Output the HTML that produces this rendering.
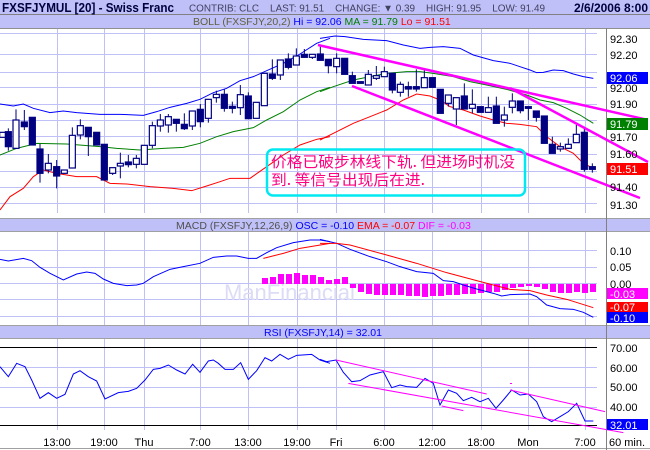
<!DOCTYPE html>
<html><head><meta charset="utf-8"><style>
html,body{margin:0;padding:0;background:#fff;width:650px;height:450px;overflow:hidden}
svg{display:block;font-family:"Liberation Sans","Noto Sans CJK SC",sans-serif}
</style></head><body>
<svg id="s" width="650" height="450" viewBox="0 0 650 450" xmlns="http://www.w3.org/2000/svg">
<rect x="0" y="0" width="650" height="450" fill="#fff"/>
<rect x="0" y="0" width="650" height="14" fill="#c0c0f8"/>
<line x1="0" y1="14.5" x2="650" y2="14.5" stroke="#808080"/>
<rect x="0" y="15" width="650" height="13" fill="#c0c0f8"/>
<line x1="0" y1="28.5" x2="650" y2="28.5" stroke="#909090"/>
<text x="2" y="12" font-size="13" font-weight="bold" fill="#000040" textLength="172" lengthAdjust="spacingAndGlyphs">FXSFJYMUL [20] - Swiss Franc</text>
<text x="189" y="11.5" font-size="10" fill="#404060" xml:space="preserve" textLength="356" lengthAdjust="spacingAndGlyphs">CONTRIB: CLC    LAST: 91.51    CHANGE: ▼ 0.39    HIGH: 91.95    LOW: 91.49</text>
<text x="648" y="12" font-size="12" font-weight="bold" fill="#000040" text-anchor="end">2/6/2006 8:00</text>
<text x="193" y="25" font-size="10.5" fill="#606040">BOLL (FXSFJY,20,2) <tspan fill="#0000ff">Hi = 92.06</tspan> <tspan fill="#008000">MA = 91.79</tspan> <tspan fill="#ff0000">Lo = 91.51</tspan></text>

<g id="grid" stroke="#c0c0f8" stroke-width="1"></g>

<rect x="0" y="219" width="650" height="12" fill="#c0c0f8"/>
<line x1="0" y1="218.5" x2="650" y2="218.5" stroke="#a0a0a0"/>
<line x1="0" y1="231.5" x2="650" y2="231.5" stroke="#a0a0a0"/>
<text x="176" y="229" font-size="10.5" fill="#505050">MACD (FXSFJY,12,26,9) <tspan fill="#0000ff">OSC = -0.10</tspan> <tspan fill="#ff0000">EMA = -0.07</tspan> <tspan fill="#ff00ff">DIF = -0.03</tspan></text>
<rect x="0" y="326" width="650" height="12" fill="#c0c0f8"/>
<line x1="0" y1="325.5" x2="650" y2="325.5" stroke="#a0a0a0"/>
<line x1="0" y1="338.5" x2="650" y2="338.5" stroke="#a0a0a0"/>
<text x="264" y="336" font-size="10.5" fill="#0000ff">RSI (FXSFJY,14) = 32.01</text>
<line x1="0" y1="448.5" x2="650" y2="448.5" stroke="#a0a0a0"/>
<line x1="606.5" y1="28" x2="606.5" y2="450" stroke="#808080"/>

<text x="224" y="300" font-size="22" fill="#dcdcf6">ManFinancial</text>

<g transform="translate(0,30) scale(0.33333)" fill="none">
<polyline vector-effect="non-scaling-stroke" stroke="#0000ff" points="0,222 40,228 70,222 100,235 150,248 190,243 230,248 300,253 360,253 430,256 470,245 510,232 560,220 600,208 640,188 680,175 720,152 760,140 800,122 850,100 900,72 950,40 990,25"/>
<polyline vector-effect="non-scaling-stroke" stroke="#008000" points="0,375 50,355 110,340 200,342 300,350 350,355 420,360 490,355 550,352 600,340 650,320 700,305 760,293 800,270 850,245 900,210 950,185 990,172"/>
<polyline vector-effect="non-scaling-stroke" stroke="#ff0000" points="0,540 30,500 70,475 100,440 130,420 170,430 230,440 290,440 330,460 380,462 450,470 520,475 575,482 620,468 660,455 690,445 750,445 800,410 850,375 900,345 950,328 990,320"/>
</g>
<g transform="translate(320,30) scale(0.33333)" fill="none">
<polyline vector-effect="non-scaling-stroke" stroke="#0000ff" points="0,25 45,18 75,20 130,28 200,32 250,45 300,55 330,52 370,50 420,55 460,75 520,92 570,100 600,110 630,120 650,128 670,127 700,120 730,122 760,132 790,140 820,145"/>
<polyline vector-effect="non-scaling-stroke" stroke="#008000" points="0,185 40,170 100,150 160,138 200,130 260,125 300,125 340,130 400,140 450,155 500,165 560,178 620,195 660,210 700,218 740,235 780,255 820,280"/>
<polyline vector-effect="non-scaling-stroke" stroke="#ff0000" points="0,330 50,305 100,280 150,260 200,240 250,210 290,192 330,198 360,210 390,230 430,240 480,258 520,270 560,280 600,283 650,290 680,320 720,350 760,370 790,400 820,415"/>
</g>
<g id="candles"></g>
<g stroke="#ff00ff" stroke-width="2.5" fill="none">
<line x1="318" y1="45" x2="648" y2="120"/>
<line x1="352" y1="86" x2="640" y2="198"/>
<line x1="510" y1="88" x2="648" y2="162"/>
</g>

<rect x="267" y="149.5" width="258" height="46" rx="6" fill="none" stroke="#00e8f0" stroke-width="2.5"/>
<text x="271" y="167" font-size="15" fill="#ff0080" font-family="'Noto Sans CJK SC',sans-serif" textLength="244" lengthAdjust="spacingAndGlyphs">价格已破步林线下轨. 但进场时机没</text>
<text x="271" y="185" font-size="15" fill="#ff0080" font-family="'Noto Sans CJK SC',sans-serif" textLength="154" lengthAdjust="spacingAndGlyphs">到. 等信号出现后在进.</text>

<g font-size="11" fill="#000">
<text x="610" y="43">92.30</text><text x="610" y="59">92.20</text>
<text x="610" y="92">92.00</text><text x="610" y="108">91.90</text>
<text x="610" y="141">91.70</text><text x="610" y="158">91.60</text>
<text x="610" y="191">91.40</text><text x="610" y="209">91.30</text>
</g>
<rect x="607" y="72" width="41" height="12" fill="#0000ff"/><text x="610" y="82" font-size="11" fill="#fff">92.06</text>
<rect x="607" y="118" width="41" height="12" fill="#008000"/><text x="610" y="128" font-size="11" fill="#fff">91.79</text>
<rect x="607" y="163" width="41" height="12" fill="#ff0000"/><text x="610" y="173" font-size="11" fill="#fff">91.51</text>

<g id="bars" fill="#ff00ff"></g>
<g transform="translate(0,210) scale(0.33333)" fill="none">
<polyline vector-effect="non-scaling-stroke" stroke="#0000ff" points="0,148 25,153 70,145 95,152 120,172 150,190 190,210 230,192 260,186 285,190 310,207 340,220 380,227 410,225 430,220 460,200 510,178 550,170 600,160 640,142 680,138 710,138 745,145 770,145 800,128 830,113 880,98 930,90 960,90 990,95"/>
<polyline vector-effect="non-scaling-stroke" stroke="#ff0000" points="790,145 850,130 900,115 990,100"/>
<polyline vector-effect="non-scaling-stroke" stroke="#0000ff" points="0,470 25,500 50,460 75,470 95,510 120,565 145,548 170,565 195,553 220,492 240,482 265,500 290,513 315,567 355,548 385,544 410,535 435,510 460,478 480,475 505,465 530,480 555,492 578,463 600,487 625,453 640,450 655,460 675,478 700,478 722,458 745,508 770,482 795,443 815,453 840,433 865,448 890,436 935,433 960,450 990,460"/>
</g>
<g transform="translate(320,210) scale(0.33333)" fill="none">
<polyline vector-effect="non-scaling-stroke" stroke="#0000ff" points="0,88 50,100 90,118 150,140 200,155 240,170 290,185 340,190 370,212 400,215 430,225 470,237 520,250 545,258 570,254 630,252 650,260 680,285 720,296 760,298 790,307 820,322"/>
<polyline vector-effect="non-scaling-stroke" stroke="#ff0000" points="0,100 50,100 90,105 200,135 290,160 380,188 470,212 520,225 570,238 630,242 680,255 740,268 820,293"/>
<polyline vector-effect="non-scaling-stroke" stroke="#0000ff" points="0,448 20,455 48,450 70,487 95,515 120,512 150,495 190,485 215,533 240,525 260,530 290,532 315,505 340,520 360,585 385,540 410,550 430,572 455,562 480,575 505,565 528,595 550,570 575,540 600,555 625,552 650,575 670,620 695,635 720,620 745,605 770,580 795,633 820,633"/>
<g stroke="#ff00ff">
<line vector-effect="non-scaling-stroke" x1="48" y1="450" x2="500" y2="552"/>
<line vector-effect="non-scaling-stroke" x1="85" y1="520" x2="910" y2="668"/>
<line vector-effect="non-scaling-stroke" x1="570" y1="540" x2="855" y2="605"/>
<line vector-effect="non-scaling-stroke" x1="365" y1="588" x2="430" y2="602"/>
</g>
</g>
<rect x="510" y="383" width="2" height="1" fill="#ff00ff"/>
<g font-size="11" fill="#000">
<text x="610" y="255">0.10</text><text x="610" y="271">0.05</text><text x="610" y="288">0.00</text>
<text x="610" y="352">70.00</text><text x="610" y="372">60.00</text><text x="610" y="391">50.00</text><text x="610" y="411">40.00</text>
</g>
<rect x="607" y="288" width="41" height="11" fill="#ff00ff"/><text x="610" y="298" font-size="11" fill="#fff">-0.03</text>
<rect x="607" y="302" width="41" height="10" fill="#ff0000"/><text x="610" y="311" font-size="11" fill="#fff">-0.07</text>
<rect x="607" y="312" width="41" height="11" fill="#0000ff"/><text x="610" y="322" font-size="11" fill="#fff">-0.10</text>
<rect x="607" y="419" width="41" height="11" fill="#0000ff"/><text x="610" y="429" font-size="11" fill="#fff">32.01</text>
<g font-size="11" fill="#000" text-anchor="middle">
<text x="57" y="446">13:00</text><text x="104" y="446">19:00</text><text x="144" y="446">Thu</text>
<text x="200" y="446">7:00</text><text x="248" y="446">13:00</text><text x="297" y="446">19:00</text>
<text x="336" y="446">Fri</text><text x="384" y="446">6:00</text><text x="432" y="446">12:00</text>
<text x="481" y="446">18:00</text><text x="528" y="446">Mon</text><text x="585" y="446">7:00</text>
<text x="627" y="446">60 min.</text>
</g>
</svg>
<script>
var NS="http://www.w3.org/2000/svg";
function el(p,t,a){var e=document.createElementNS(NS,t);for(var k in a)e.setAttribute(k,a[k]);p.appendChild(e);return e;}
var g=document.getElementById('grid');
var vx=[57,104,144,200,248,297,336,384,432,481,528,585];
var segs=[[29,213],[232,325],[339,430]];
vx.forEach(function(x){segs.forEach(function(s){el(g,'line',{x1:x+.5,y1:s[0],x2:x+.5,y2:s[1]});});});
var hy=[[33,54,72,87,104,120,136,154,171,187,203],[250,267,283,299,316],[367,387,407]];
hy.forEach(function(a){a.forEach(function(y){el(g,'line',{x1:0,y1:y+.5,x2:597,y2:y+.5});});});
el(g,'line',{x1:0,y1:347.5,x2:597,y2:347.5,stroke:'#000'});
el(g,'line',{x1:0,y1:425.5,x2:597,y2:425.5,stroke:'#000'});
var L=[[8,0,307,322],[25,1,305,350,295,362],[48,0,270,355,238,355],[73,1,276,290,240,300],[97,1,262,345],[120,1,357,430,342,458],[145,0,400,420,372,430],[170,1,410,438,390,475],[193,0,420,430],[217,0,316,414,292,414],[241,0,287,315,268,328],[265,1,292,320,292,378],[290,1,307,345],[313,1,343,450],[338,0,413,430,413,435],[361,0,400,408,368,445],[385,1,396,404,375,412],[409,0,385,403,375,415],[433,0,346,403],[457,0,287,346,275,355],[481,0,270,288,252,305],[505,0,260,285,252,308],[529,1,268,280,268,305],[553,1,283,296,250,300],[577,0,243,288,243,300],[601,1,238,275,222,292],[625,0,208,265,208,278],[649,0,193,203,182,218],[673,1,193,235,178,245],[697,1,229,235,215,250],[721,0,194,233,165,255],[745,1,198,266,187,266],[769,0,217,265],[793,0,130,227],[817,1,132,145,88,150],[841,0,90,135,90,150],[865,1,87,112,70,118],[889,0,78,105,55,105],[913,1,73,82,57,82],[937,0,73,82,73,87],[961,1,72,91,50,91]];
var R=[[25,1,88,107,88,130],[50,0,85,110,70,130],[74,1,85,133],[97,1,137,160,125,160],[121,1,155,160],[145,0,133,165,120,165],[169,0,137,145,108,150],[193,0,125,140,110,140],[217,1,130,180,130,190],[241,0,163,187,155,200],[265,1,170,177,155,200],[289,1,170,177,118,185],[313,0,143,173,120,173],[337,1,143,172],[361,1,178,250],[385,0,195,220,195,230],[409,0,203,237,203,285],[433,1,198,237,160,237],[457,0,223,235,178,250],[481,1,230,247],[505,0,233,247,200,247],[529,1,228,280,200,280],[553,0,255,270,230,290],[577,0,213,232,190,250],[601,1,213,242,213,250],[625,1,230,235,230,270],[649,1,243,262,243,275],[673,1,258,340],[697,1,343,370,320,370],[721,0,350,357,338,365],[745,0,343,355,325,357],[769,0,313,338,285,338],[793,1,307,418,290,425],[817,1,410,418,400,428]];
var c=document.getElementById('candles');
function draw(arr,ox){arr.forEach(function(d){var x=ox+d[0]/3,t=30+d[2]/3,b=30+d[3]/3;var wt=30+(d[4]||d[2])/3,wb=30+(d[5]||d[3])/3;
el(c,'line',{x1:x,y1:wt,x2:x,y2:wb,stroke:'#000080'});
el(c,'rect',{x:x-3,y:t,width:6,height:Math.max(1,b-t),fill:d[1]?'#000080':'#fff',stroke:'#000080','stroke-width':1.2});});}
draw(L,0);draw(R,320);
var bb=document.getElementById('bars');
var up=[278,277,274,274,273,275,275,277,280];
up.forEach(function(t,i){el(bb,'rect',{x:262+i*8,y:t,width:6,height:284-t});});
var dn=[0,-6,4,8,10,11,11,11,11,12,12,13,12,12,11,11,10,10,9,8,8,6,4,3,2,3,5,8,9,9,8,9,8,10];
dn.forEach(function(h,i){var x=334+i*8;if(x>594)return;if(h<0)el(bb,'rect',{x:x,y:277,width:6,height:7});else if(h>0)el(bb,'rect',{x:x,y:284,width:6,height:h});else el(bb,'rect',{x:x,y:279,width:6,height:5});});
</script>
</body></html>
